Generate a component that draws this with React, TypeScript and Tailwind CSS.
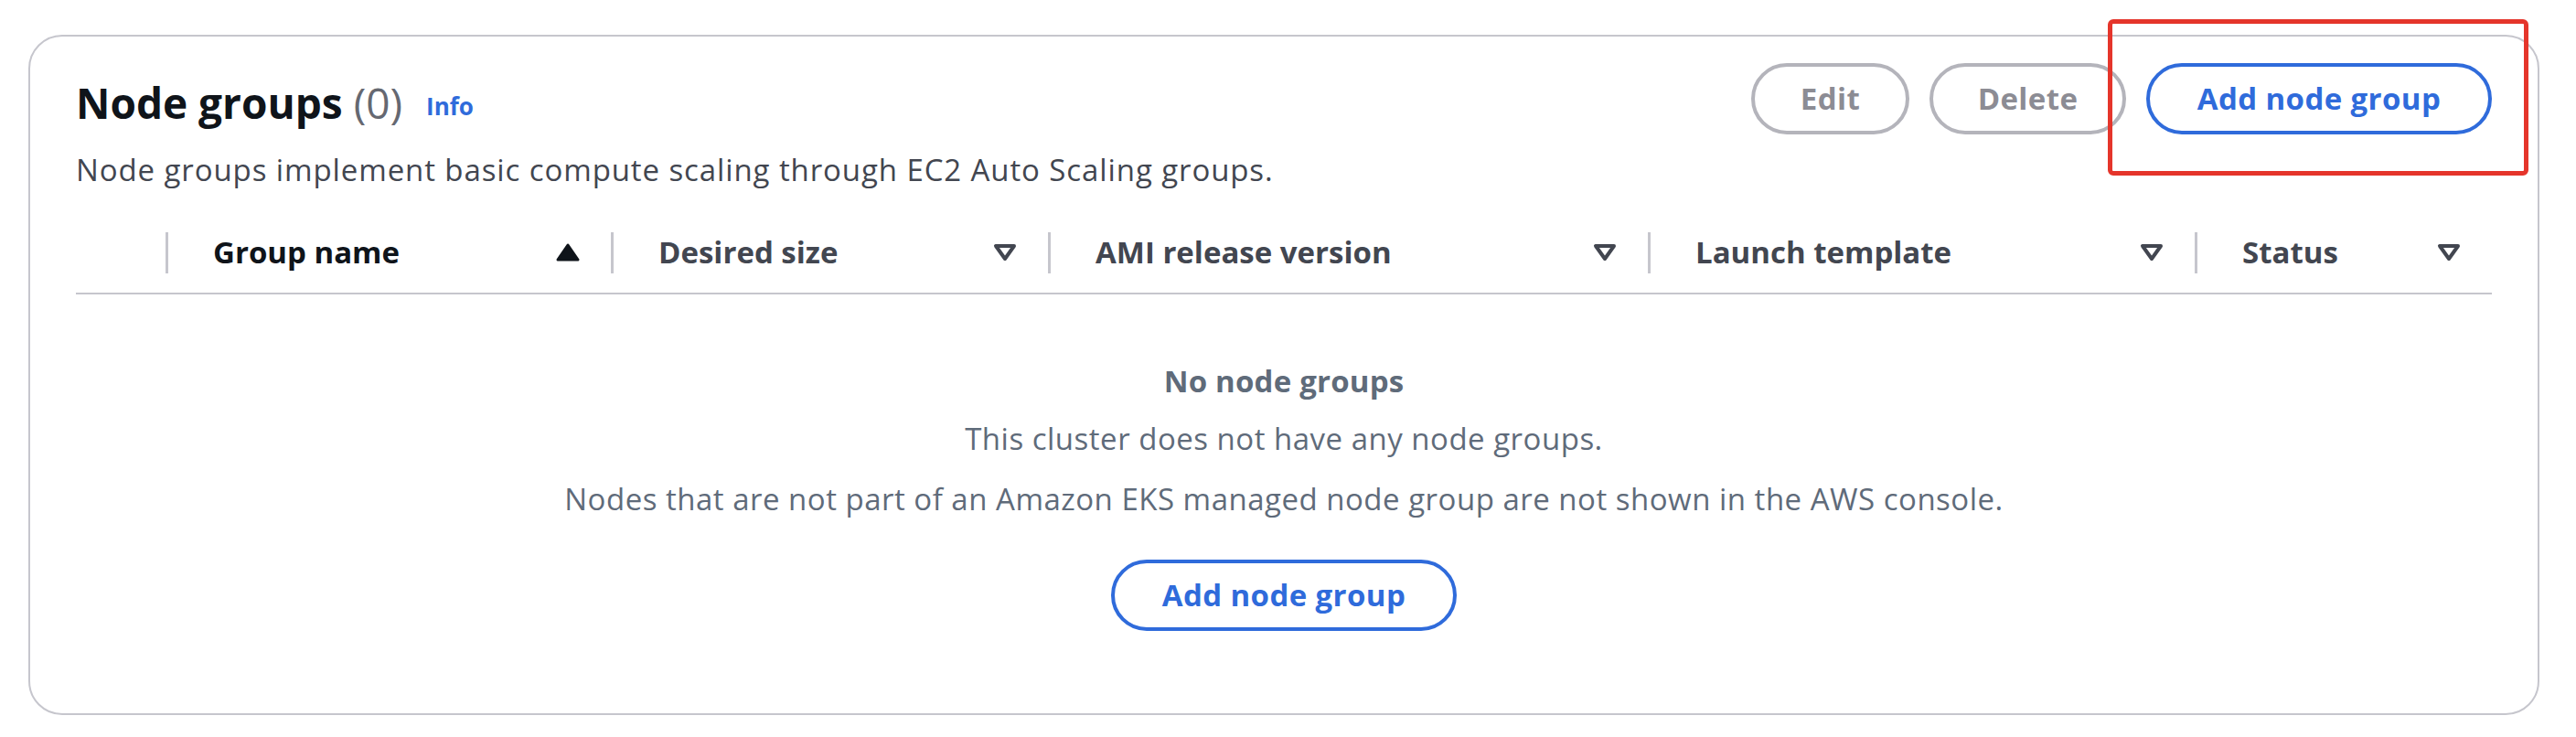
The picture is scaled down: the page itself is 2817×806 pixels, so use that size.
import React from 'react'

const SortAsc = () => (
    <svg width="26" height="20" viewBox="0 0 26 20">
        <path d="M13 2 L24 18 L2 18 Z" fill="#0f141a" stroke="#0f141a" strokeWidth="3" strokeLinejoin="round" />
    </svg>
)

const SortNone = () => (
    <svg width="26" height="20" viewBox="0 0 26 20">
        <path d="M3 3 L23 3 L13 17 Z" fill="none" stroke="#424650" strokeWidth="4" strokeLinejoin="round" />
    </svg>
)

const columns = [
    { name: 'Group name', width: 'w-[487px]', active: true },
    { name: 'Desired size', width: 'w-[478px]', active: false },
    { name: 'AMI release version', width: 'w-[656px]', active: false },
    { name: 'Launch template', width: 'w-[598px]', active: false },
    { name: 'Status', width: 'flex-1', active: false },
]

const App = () => {
    return (
        <div className="relative w-[2817px] h-[806px] bg-white pt-[38px] pl-[31px] font-['Open_Sans',sans-serif]">
            <div className="w-[2746px] h-[744px] border-2 border-[#c6c6cd] rounded-[37px] px-[50px] pt-[29px]">
                {/* header */}
                <div className="flex justify-between items-start">
                    <div>
                        <div className="h-[78px] flex items-center pt-[8px]">
                            <h2 className="text-[46px] leading-none font-bold text-[#0f141a]">
                                Node groups <span className="font-normal text-[#656871]">(0)</span>
                            </h2>
                            <a className="ml-[26px] mt-[8px] text-[26px] font-bold text-[#2f6bdb]">Info</a>
                        </div>
                        <p className="mt-[19px] text-[33px] leading-[40px] tracking-[0.9px] text-[#424650]">
                            Node groups implement basic compute scaling through EC2 Auto Scaling groups.
                        </p>
                    </div>
                    <div className="flex gap-[22px] text-[33px] tracking-[0.4px] font-bold">
                        <button className="w-[173px] h-[78px] rounded-full border-4 border-[#b4b4bb] text-[#8c8c94] flex items-center justify-center">
                            Edit
                        </button>
                        <button className="w-[215px] h-[78px] rounded-full border-4 border-[#b4b4bb] text-[#8c8c94] flex items-center justify-center">
                            Delete
                        </button>
                        <button className="w-[378px] h-[78px] rounded-full border-4 border-[#2f6bdb] text-[#2f6bdb] flex items-center justify-center">
                            Add node group
                        </button>
                    </div>
                </div>

                {/* table header */}
                <div className="mt-[26px] h-[88px] flex items-center border-b-2 border-[#c6c6cd] box-content">
                    <div className="w-[98px]" />
                    {columns.map((col) => (
                        <div key={col.name} className={`${col.width} flex items-center`}>
                            <div className="w-[3px] h-[45px] bg-[#c6c6cd]" />
                            <span className={`ml-[49px] text-[33px] font-bold ${col.active ? 'text-[#0f141a]' : 'text-[#424650]'}`}>
                                {col.name}
                            </span>
                            <span className="ml-auto mr-[34px] flex">
                                {col.active ? <SortAsc /> : <SortNone />}
                            </span>
                        </div>
                    ))}
                </div>

                {/* empty state */}
                <div className="flex flex-col items-center text-[33px] leading-[40px] tracking-[0.5px] text-[#5f6b7a]">
                    <p className="mt-[75px] font-bold tracking-[0.2px]">No node groups</p>
                    <p className="mt-[23px]">This cluster does not have any node groups.</p>
                    <p className="mt-[26px]">Nodes that are not part of an Amazon EKS managed node group are not shown in the AWS console.</p>
                    <button className="mt-[46px] w-[378px] h-[78px] rounded-full border-4 border-[#2f6bdb] font-bold tracking-[0.4px] text-[#2f6bdb] flex items-center justify-center">
                        Add node group
                    </button>
                </div>
            </div>

            {/* annotation */}
            <div className="absolute left-[2305px] top-[21px] w-[460px] h-[171px] border-[5px] border-[#e5352b] rounded-[6px]" />
        </div>
    )
}

export default App
